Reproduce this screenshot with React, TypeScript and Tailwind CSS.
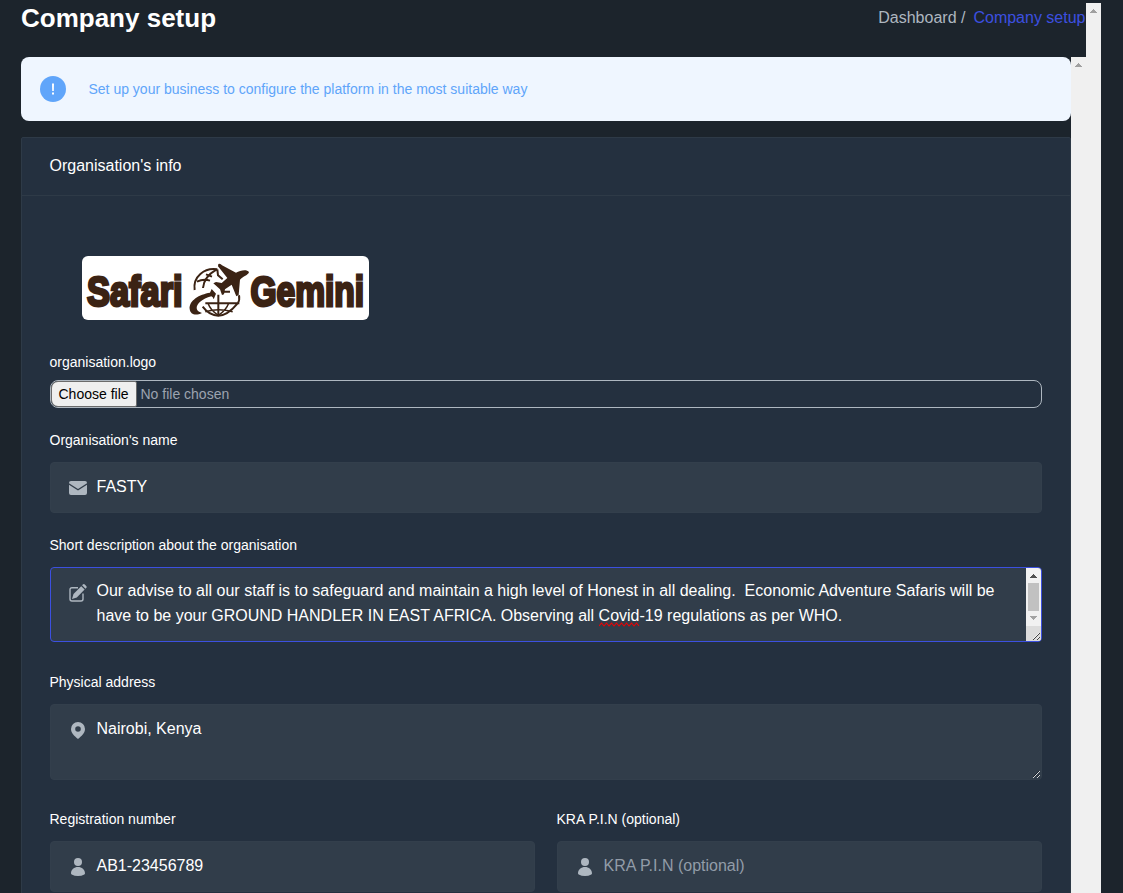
import type { ReactNode } from "react";

function Arrow({ down = false, color }: { down?: boolean; color: string }) {
  return (
    <svg width="7" height="4" viewBox="0 0 7 4" shapeRendering="crispEdges" fill={color}>
      {down ? (
        <path d="M0 0h7v1H0zM1 1h5v1H1zM2 2h3v1H2zM3 3h1v1H3z" />
      ) : (
        <path d="M3 0h1v1H3zM2 1h3v1H2zM1 2h5v1H1zM0 3h7v1H0z" />
      )}
    </svg>
  );
}

function ScrollTrack() {
  return (
    <div className="flex w-[15px] shrink-0 justify-center bg-[#f0f0f0] pt-[6px]">
      <Arrow color="#a0a0a0" />
    </div>
  );
}

function Grip({ light = false }: { light?: boolean }) {
  return (
    <svg width="8" height="7" viewBox="0 0 8 7" shapeRendering="crispEdges">
      <path
        d="M0 6h1v1H0zM1 5h1v1H1zM2 4h1v1H2zM3 3h1v1H3zM4 2h1v1H4zM5 1h1v1H5zM6 0h1v1H6zM4 6h1v1H4zM5 5h1v1H5zM6 4h1v1H6z"
        fill={light ? "#d4d6d8" : "#454545"}
      />
      <path
        d="M0 5h1v1H0zM1 4h1v1H1zM2 3h1v1H2zM3 2h1v1H3zM4 1h1v1H4zM5 0h1v1H5zM4 5h1v1H4zM5 4h1v1H5z"
        fill={light ? "#18202a" : "#f2f2f2"}
      />
    </svg>
  );
}

const MailIcon = () => (
  <svg width="18" height="14" viewBox="0 0 18 14" fill="#aeb7c0">
    <path d="M2 0h14q2 0 2 2v.3L9 8 0 2.3V2Q0 0 2 0z" />
    <path d="M0 3.8l9 5.7 9-5.7V12q0 2-2 2H2q-2 0-2-2z" />
  </svg>
);

const EditIcon = () => (
  <svg width="18" height="18" viewBox="0 0 18 18" fill="none">
    <path d="M9 3.7H3q-2 0-2 2V15q0 2 2 2h9q2 0 2-2V9.5" stroke="#aeb7c0" strokeWidth="1.4" />
    <path d="M12.2 2.2l3.4 3.4-7.8 7.8-4.8 1.5 1.5-4.8zM13.1 1.3l.7-.7q1-1 2 0l1.4 1.4q1 1 0 2l-.7.7z" fill="#aeb7c0" />
  </svg>
);

const PinIcon = () => (
  <svg width="14" height="17" viewBox="0 0 14 17" fill="#aeb7c0">
    <path fillRule="evenodd" d="M7 0a7 7 0 0 0-7 7c0 4.2 3.6 7.2 7 10 3.4-2.8 7-5.8 7-10a7 7 0 0 0-7-7zm0 4.2a2.8 2.8 0 1 1 0 5.6 2.8 2.8 0 0 1 0-5.6z" />
  </svg>
);

const UserIcon = () => (
  <svg width="14" height="18" viewBox="0 0 14 18" fill="#aeb7c0">
    <circle cx="7" cy="4" r="4" />
    <path d="M0 15.3C0 11.5 3.2 9 7 9s7 2.5 7 6.3q0 .7-.7 1.1Q10.5 18 7 18T.7 16.4Q0 16 0 15.3z" />
  </svg>
);

function Label({ children }: { children: ReactNode }) {
  return <div className="-ml-[0.5px] h-5 text-[14px] leading-5 whitespace-nowrap text-white">{children}</div>;
}

function Field({ icon, children, muted = false }: { icon: ReactNode; children: ReactNode; muted?: boolean }) {
  return (
    <div className="mt-3 flex h-[51px] rounded-[4px] border border-[#333f4c] bg-[#313d4a] pt-3 pl-[18px]">
      <div className="flex w-[18px] shrink-0 justify-center pt-1">{icon}</div>
      <div className={muted ? "ml-[9.5px] text-[16px] leading-6 text-[#929ca8]" : "ml-[9.5px] text-[16px] leading-6 text-white"}>{children}</div>
    </div>
  );
}

function Logo() {
  return (
    <svg width="287" height="64" viewBox="0 0 287 64" className="rounded-[6px] bg-white">
      <g fill="#3b2314" stroke="#3b2314" strokeWidth="3" fontFamily="'Liberation Sans', Arial, sans-serif" fontWeight="700" fontSize="43">
        <text transform="translate(5 50.3) scale(.8 1)">Safari</text>
        <text transform="translate(168.500 50.300) scale(.78 1)">Gemini</text>
      </g>
      <g transform="translate(104 4) scale(.3333)">
        <g fill="none" stroke="#3b2314" strokeWidth="6">
          <path d="M26 90C20 50 55 22 94 28" />
          <path d="M33 65Q52 56 72 62M51 84Q54 50 91 29M94 28L96 46 110 58M60 43L78 50" />
          <path d="M112 95h20M159 106Q162 120 155 131M58 130H160M97 104V168M50 140Q70 167 97 167T155 130" />
          <path d="M66 130Q74 152 97 166Q120 152 128 130M58 155Q97 143 140 155" strokeWidth="4.5" />
        </g>
        <path d="M77 87L90 101 83 118Q81 110 76 109C48 116 32 132 32 144Q32 154 48 159C28 169 13 163 11 147C9 121 40 103 72 98Z" fill="#3b2314" />
        <path d="M97 12Q103 9 108 16L150 38C163 31 182 27 189 36C187 46 171 48 162 59L158 105 151 109 137 74 117 88 114 103 108 105 102 88 82 70 90 66 107 69 124 54 96 19Z" fill="#3b2314" />
      </g>
    </svg>
  );
}

export default function App() {
  return (
    <div className="flex h-[893px] w-[1123px] overflow-hidden bg-[#1c242c] pt-[3px] pl-[21px] font-['Liberation_Sans',Arial,sans-serif]">
      <main className="flex w-[1065px] shrink-0 flex-col">
        <header className="flex h-[54px] shrink-0 items-start justify-between whitespace-nowrap">
          <h1 className="text-[26px] leading-[30px] font-bold text-white">Company setup</h1>
          <nav className="flex gap-2 pt-[3px] pr-[0.5px] text-[16px] leading-6">
            <span className="text-[#aeb7c0]">Dashboard /</span>
            <span className="text-[#3c50e0]">Company setup</span>
          </nav>
        </header>
        <div className="flex min-h-0 flex-1">
          <div className="w-[1050px] shrink-0">
            <div className="flex h-16 items-center rounded-lg bg-[#eff6ff] pl-[19px]">
              <div className="flex size-[26px] items-center justify-center rounded-full bg-[#60a5fa]">
                <svg width="2" height="12" viewBox="0 0 2 12" fill="white">
                  <path d="M0 .5h2l-.2 7.500H.2z" />
                  <rect y="9.500" width="2" height="2" />
                </svg>
              </div>
              <p className="ml-[22.5px] text-[14px] leading-5 text-[#60a5fa]">Set up your business to configure the platform in the most suitable way</p>
            </div>
            <section className="mt-4 h-[900px] rounded-[2px] border border-[#2e3a47] bg-[#24303f]">
              <div className="flex h-[58px] items-center border-b border-[#2e3a47] px-[27.5px] pb-[2px] text-[16px] text-white">Organisation's info</div>
              <div className="px-7 pt-[60px]">
                <div className="ml-8 h-24">
                  <Logo />
                </div>
                <Label>organisation.logo</Label>
                <div className="mt-2 mb-[22px] flex h-7 items-center overflow-hidden rounded-[8px] border border-[#aeb7c0] text-[14px]">
                  <div className="flex h-[26px] w-[86px] items-center rounded-[2px] rounded-l-[7px] border border-[#6b6b6b] bg-[#efefef] pl-[6.5px] whitespace-nowrap text-black">Choose file</div>
                  <span className="ml-[3.5px] text-[#9ca3af]">No file chosen</span>
                </div>
                <Label>Organisation's name</Label>
                <Field icon={<div className="pt-[2px]"><MailIcon /></div>}>FASTY</Field>
                <div className="mt-[22px]"><Label>Short description about the organisation</Label></div>
                <div className="mt-3 flex h-[75px] overflow-hidden rounded-[4px] border border-[#3c50e0] bg-[#313d4a] pl-[18px]">
                  <div className="w-[18px] shrink-0 pt-4"><EditIcon /></div>
                  <div className="ml-[9.5px] flex-1 pt-[10px] text-[16px] leading-[25px] whitespace-pre text-white">
                    <div>Our advise to all our staff is to safeguard and maintain a high level of Honest in all dealing.  Economic Adventure Safaris will be</div>
                    <div>have to be your GROUND HANDLER IN EAST AFRICA. Observing all <span className="relative inline-block">Covid<svg className="absolute bottom-[1px] left-0" width="41" height="5" viewBox="0 0 41 5" fill="none" stroke="#f00000" strokeWidth="1.1"><path d="M0 4l2.5-3L5 4l2.5-3L10 4l2.5-3L15 4l2.5-3L20 4l2.5-3L25 4l2.5-3L30 4l2.5-3L35 4l2.5-3L40 4" /></svg></span>-19 regulations as per WHO.</div>
                  </div>
                  <div className="flex w-[15px] shrink-0 flex-col items-center bg-[#f1f1f1]">
                    <div className="flex h-[15px] items-center"><Arrow color="#505050" /></div>
                    <div className="h-[28px] w-[11px] bg-[#c1c1c1]" />
                    <div className="flex h-[15px] items-center pb-[1px]"><Arrow down color="#a3a3a3" /></div>
                    <div className="flex h-[15px] w-full items-end justify-end bg-[#dcdcdc] pb-[1px]"><Grip /></div>
                  </div>
                </div>
                <div className="mt-[30px]"><Label>Physical address</Label></div>
                <div className="mt-3 flex h-[76px] rounded-[4px] border border-[#333f4c] bg-[#313d4a] pl-[18px]">
                  <div className="flex w-[18px] shrink-0 justify-center pt-[17px]"><PinIcon /></div>
                  <div className="ml-[9.5px] flex-1 pt-[11px] text-[16px] leading-[25px] text-white">Nairobi, Kenya</div>
                  <div className="flex items-end pb-[1px]"><Grip light /></div>
                </div>
                <div className="mt-[29px] grid grid-cols-2 gap-[22px]">
                  <div>
                    <Label>Registration number</Label>
                    <Field icon={<UserIcon />}>AB1-23456789</Field>
                  </div>
                  <div>
                    <Label>KRA P.I.N (optional)</Label>
                    <Field muted icon={<UserIcon />}>KRA P.I.N (optional)</Field>
                  </div>
                </div>
              </div>
            </section>
          </div>
          <ScrollTrack />
        </div>
      </main>
      <ScrollTrack />
    </div>
  );
}
